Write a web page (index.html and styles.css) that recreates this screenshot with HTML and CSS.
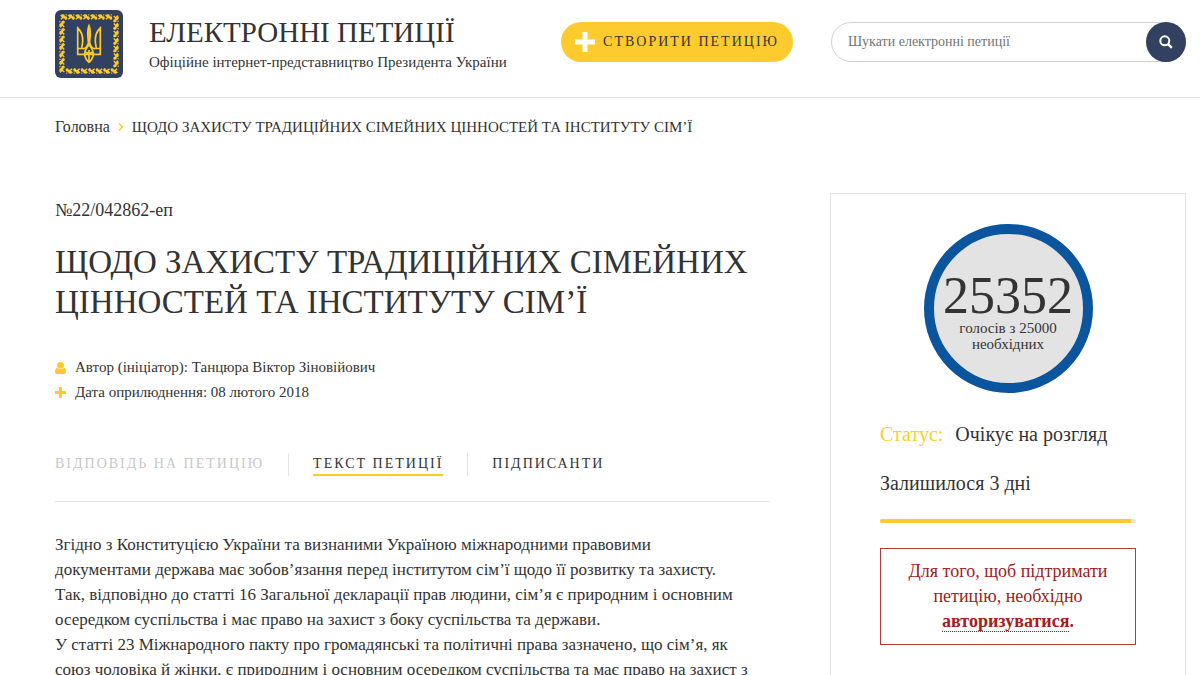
FILE: index.html
```html
<!DOCTYPE html>
<html lang="uk">
<head>
<meta charset="utf-8">
<meta name="viewport" content="width=device-width, initial-scale=1">
<title>Електронні петиції</title>
<link rel="stylesheet" href="styles.css">
</head>
<body>
<header class="header">
  <a class="brand" href="#">
    <svg class="brand-logo" viewBox="0 0 68 68" aria-hidden="true">
      <defs>
        <g id="leaf">
          <path d="M0 1.600L2 .2L4.200 .6L5 2.200L6.800 2.600L7.400 4.600L6.200 6L4.600 5.200L4.200 4L2.800 4.400L1.400 5.800L.4 4.800L2 3.200Z"/>
          <path d="M5.400 .4L7 .2L6.600 1.600L5.800 1.600Z"/>
        </g>
        <g id="leaf-row">
          <use href="#leaf" x="0"/><use href="#leaf" x="7.500"/><use href="#leaf" x="15"/><use href="#leaf" x="22.500"/>
          <use href="#leaf" x="30"/><use href="#leaf" x="37.500"/><use href="#leaf" x="45"/>
        </g>
      </defs>
      <rect width="68" height="68" rx="6" fill="#31415f"/>
      <g fill="#fecb2f">
        <use href="#leaf-row" x="5" y="4"/>
        <use href="#leaf-row" x="5" y="4" transform="rotate(90 34 34)"/>
        <use href="#leaf-row" x="5" y="4" transform="rotate(180 34 34)"/>
        <use href="#leaf-row" x="5" y="4" transform="rotate(270 34 34)"/>
      </g>
      <g fill="none" stroke="#fecb2f" stroke-width="1.700">
        <path d="M22.700 18V44.300H29.500C30.400 48.500 31.700 50.700 34 52.300C36.300 50.700 37.600 48.500 38.500 44.300H45.300V18C41.500 21.500 40.200 25.500 40.300 30.500C40.300 34.500 41.500 36 41 37.800C40 39.600 36.200 38.500 34.600 33C34.500 30 35.500 27 35.200 22C35.100 19 34.700 17 34 15.500C33.300 17 32.900 19 32.800 22C32.500 27 33.500 30 33.400 33C31.800 38.500 28 39.600 27 37.800C26.500 36 27.700 34.500 27.700 30.500C27.800 25.500 26.500 21.500 22.700 18Z"/>
        <path d="M22.700 38.500H27M41 38.500H45.300M34 16V34C33.500 37 29.500 38 29.500 44.300H38.500C38.500 38 34.500 37 34 34M34 40V52M29.500 44.300C29.500 41.500 33 41.500 34 45C35 41.500 38.500 41.500 38.500 44.300"/>
      </g>
    </svg>
    <span class="brand-text">
      <span class="brand-name">ЕЛЕКТРОННІ ПЕТИЦІЇ</span>
      <span class="brand-note">Офіційне інтернет-представництво Президента України</span>
    </span>
  </a>
  <button class="create" type="button">
    <svg class="create-icon" viewBox="0 0 20 20" aria-hidden="true"><path d="M7.500 0h5v7.500H20v5h-7.500V20h-5v-7.500H0v-5h7.500z" fill="#fff"/></svg>
    СТВОРИТИ ПЕТИЦІЮ
  </button>
  <form class="search">
    <input class="search-input" type="text" placeholder="Шукати електронні петиції" aria-label="Шукати електронні петиції">
    <button class="search-button" type="button" aria-label="Шукати">
      <svg class="search-icon" viewBox="0 0 14 14" aria-hidden="true"><circle cx="5.800" cy="5.800" r="4.500" fill="none" stroke="#fff" stroke-width="2"/><path d="M9 9L12.800 12.800" stroke="#fff" stroke-width="2.400"/></svg>
    </button>
  </form>
</header>
<nav class="crumbs" aria-label="Шлях">
  <a class="crumb-home" href="#">Головна</a>
  <svg class="crumb-arrow" viewBox="0 0 6 8" aria-hidden="true"><path d="M1 .5L4.500 4L1 7.500" fill="none" stroke="#fecb2f" stroke-width="1.500"/></svg>
  <span>ЩОДО ЗАХИСТУ ТРАДИЦІЙНИХ СІМЕЙНИХ ЦІННОСТЕЙ ТА ІНСТИТУТУ СІМ’Ї</span>
</nav>
<div class="layout">
  <main class="petition">
    <div class="number">№22/042862-еп</div>
    <h1 class="title">ЩОДО ЗАХИСТУ ТРАДИЦІЙНИХ СІМЕЙНИХ ЦІННОСТЕЙ ТА ІНСТИТУТУ СІМ’Ї</h1>
    <div class="meta">
      <svg class="meta-icon" viewBox="0 0 12 12" aria-hidden="true"><path d="M5.500 0C7.800 0 9 1.300 9 3.300S7.800 6.800 5.500 6.800S2 5.300 2 3.300S3.200 0 5.500 0ZM1.900 5.600C3.800 7.600 7.200 7.600 9.100 5.600C10.600 6.200 11 8 11 10C11 11.300 10.300 12 9 12H2C.7 12 0 11.300 0 10C0 8 .4 6.200 1.900 5.600Z" fill="#fecb2f"/></svg>
      <span>Автор (ініціатор): Танцюра Віктор Зіновійович</span>
    </div>
    <div class="meta">
      <svg class="meta-icon" viewBox="0 0 12 12" aria-hidden="true"><path d="M4 0h3v4H11v3H7v4H4V7H0V4h4z" fill="#fecb2f"/></svg>
      <span>Дата оприлюднення: 08 лютого 2018</span>
    </div>
    <div class="tabs">
      <div class="tab"><button class="tab-button tab-disabled" type="button">ВІДПОВІДЬ НА ПЕТИЦІЮ</button></div>
      <div class="tab"><button class="tab-button tab-active" type="button">ТЕКСТ ПЕТИЦІЇ</button></div>
      <div class="tab"><button class="tab-button" type="button">ПІДПИСАНТИ</button></div>
    </div>
    <div class="article">
      <p>Згідно з Конституцією України та визнаними Україною міжнародними правовими<br>документами держава має зобов’язання перед інститутом сім’ї щодо її розвитку та захисту.<br>Так, відповідно до статті 16 Загальної декларації прав людини, сім’я є природним і основним<br>осередком суспільства і має право на захист з боку суспільства та держави.</p>
      <p>У статті 23 Міжнародного пакту про громадянські та політичні права зазначено, що сім’я, як<br>союз чоловіка й жінки, є природним і основним осередком суспільства та має право на захист з</p>
    </div>
  </main>
  <aside class="card">
    <div class="votes">
      <span class="votes-count">25352</span>
      <span class="votes-note">голосів з 25000<br>необхідних</span>
    </div>
    <div class="status"><span class="status-label">Статус:</span><span>Очікує на розгляд</span></div>
    <div class="remaining">Залишилося 3 дні</div>
    <div class="bar"><div class="bar-fill"></div></div>
    <div class="notice">Для того, щоб підтримати петицію, необхідно <a class="notice-link" href="#">авторизуватися</a><b>.</b></div>
  </aside>
</div>
</body>
</html>
```
FILE: styles.css
```css
* { box-sizing: border-box; }
html, body { overflow: hidden; height: 100%; }
body { margin: 0; background: #fff; color: #333; font-family: "Liberation Serif", serif; font-size: 17px; line-height: 25px; }
a { color: inherit; text-decoration: none; }
button, input { font: inherit; color: inherit; }
button { border: 0; padding: 0; background: none; }

.header { display: flex; align-items: center; height: 98px; padding: 0 14px 14px 55px; border-bottom: 1px solid #e6e6e6; }
.brand { display: flex; flex: 1; gap: 26px; }
.brand-logo { width: 68px; height: 68px; margin-top: 4px; }
.brand-text { display: flex; flex-direction: column; padding-top: 6px; white-space: nowrap; }
.brand-name { font-size: 29px; line-height: 40px; }
.brand-note { font-size: 15px; line-height: 20px; }
.create { display: flex; align-items: center; justify-content: center; gap: 8px; width: 232px; height: 40px; margin-right: 38px; border-radius: 20px; background: #fecb2f; font-size: 14px; letter-spacing: 2px; white-space: nowrap; }
.create-icon { width: 20px; height: 20px; flex: none; }
.search { display: flex; width: 355px; height: 40px; border: 1px solid #d0cfdf; border-radius: 20px; }
.search-input { flex: 1; min-width: 0; padding: 0 16px; border: 0; outline: 0; background: none; font-size: 14px; }
.search-input::placeholder { color: #757575; opacity: 1; }
.search-button { display: flex; align-items: center; justify-content: center; width: 40px; height: 40px; margin: -1px; border-radius: 50%; background: #31415f; }
.search-icon { width: 14px; height: 14px; }

.crumbs { display: flex; align-items: center; gap: 8px; padding: 19px 14px 0 55px; font-size: 15px; line-height: 20px; }
.crumb-home { font-size: 16px; }
.crumb-arrow { width: 6px; height: 8px; }

.layout { display: grid; grid-template-columns: minmax(0, 1fr) 356px; gap: 60px; padding: 56px 14px 0 55px; }
.number { padding-top: 5px; font-size: 18px; }
.title { margin: 19px 0 33px; font-size: 33px; line-height: 40px; font-weight: 400; }
.meta { display: flex; align-items: center; gap: 8px; font-size: 15px; }
.meta-icon { width: 12px; height: 12px; }
.tabs { display: flex; margin-top: 48px; padding-bottom: 25px; border-bottom: 1px solid #e6e6e6; }
.tab { height: 23px; padding: 0 24px; border-left: 1px solid #e6e6e6; }
.tab:first-child { padding-left: 0; border-left: 0; }
.tab-button { display: block; height: 23px; border-bottom: 2px solid transparent; font-size: 14px; line-height: 20px; letter-spacing: 2px; white-space: nowrap; }
.tab-disabled { color: #c8c8c8; }
.tab-active { border-bottom-color: #fecb2f; }
.article { margin-top: 30px; white-space: nowrap; }
.article p { margin: 0; }

.card { height: 500px; padding: 30px 49px; border: 1px solid #e6e6e6; border-bottom: 0; font-size: 20px; }
.votes { display: flex; flex-direction: column; align-items: center; width: 169px; height: 169px; margin: 0 auto; padding-top: 38px; border: 10px solid #0b549e; border-radius: 50%; background: #e3e3e3; text-align: center; }
.votes-count { font-size: 52px; line-height: 48px; }
.votes-note { font-size: 15px; line-height: 16px; white-space: nowrap; }
.status { display: flex; gap: 12px; margin-top: 29px; }
.status-label { color: #fecb2f; }
.remaining { margin-top: 24px; }
.bar { height: 4px; margin-top: 23px; border-radius: 2px; background: #e3e3e3; }
.bar-fill { width: 98%; height: 4px; border-radius: 2px 0 0 2px; background: #fecb2f; }
.notice { margin-top: 25px; padding: 10px 25px; border: 1px solid #b13b3b; color: #9f2020; text-align: center; font-size: 18px; }
.notice-link { font-weight: 700; border-bottom: 1px dotted #9f2020; }
```
